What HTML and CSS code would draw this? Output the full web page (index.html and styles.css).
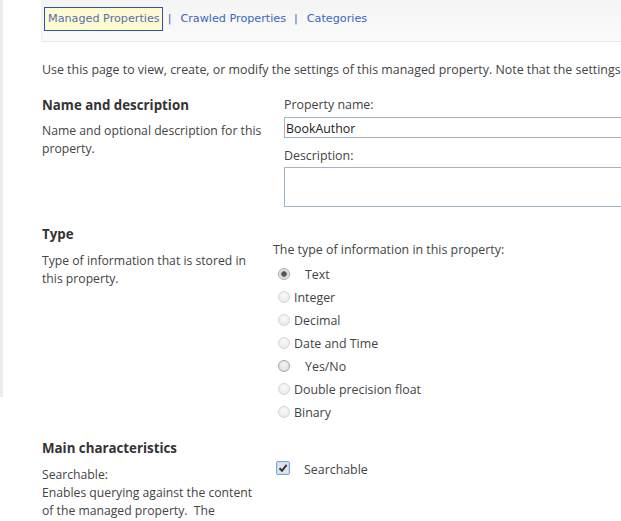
FILE: index.html
```html
<!DOCTYPE html>
<html>
<head>
<meta charset="utf-8">
<link rel="stylesheet" href="styles.css">
</head>
<body>
<div class="page">
  <nav class="tabs">
    <a class="tab tab-active" href="#">Managed Properties</a>
    <span class="sep">|</span>
    <a class="tab" href="#">Crawled Properties</a>
    <span class="sep">|</span>
    <a class="tab" href="#">Categories</a>
  </nav>

  <main class="content">
    <p class="intro">Use this page to view, create, or modify the settings of this managed property. Note that the settings that are changed here apply to all sites.</p>

    <section class="section section-name">
      <div class="left">
        <h2 class="heading">Name and description</h2>
        <p class="desc">Name and optional description for this property.</p>
      </div>
      <div class="right">
        <label class="field-label">Property name:</label>
        <input class="text-input" type="text" value="BookAuthor">
        <label class="field-label field-label-gap">Description:</label>
        <textarea class="text-area"></textarea>
      </div>
    </section>

    <section class="section section-type">
      <div class="left">
        <h2 class="heading">Type</h2>
        <p class="desc">Type of information that is stored in this property.</p>
      </div>
      <div class="right right-type">
        <div class="field-label">The type of information in this property:</div>
        <ul class="radios">
          <li class="radio-row"><span class="radio radio-checked"></span><span class="radio-text radio-text-wide">Text</span></li>
          <li class="radio-row"><span class="radio"></span><span class="radio-text">Integer</span></li>
          <li class="radio-row"><span class="radio"></span><span class="radio-text">Decimal</span></li>
          <li class="radio-row"><span class="radio"></span><span class="radio-text">Date and Time</span></li>
          <li class="radio-row"><span class="radio radio-enabled"></span><span class="radio-text radio-text-wide">Yes/No</span></li>
          <li class="radio-row"><span class="radio"></span><span class="radio-text">Double precision float</span></li>
          <li class="radio-row"><span class="radio"></span><span class="radio-text">Binary</span></li>
        </ul>
      </div>
    </section>

    <section class="section section-main">
      <div class="left">
        <h2 class="heading">Main characteristics</h2>
        <p class="desc desc-narrow">Searchable:<br>Enables querying against the content of the managed property.&nbsp; The content of this managed property is included in the full-text index.</p>
      </div>
      <div class="right right-main">
        <div class="check-row">
          <span class="checkbox"><svg width="10" height="10" viewBox="0 0 10 10"><path d="M1.5 5.2 L4 7.8 L8.6 1.8" fill="none" stroke="#333" stroke-width="2"/></svg></span>
          <span class="check-text">Searchable</span>
        </div>
      </div>
    </section>
  </main>
</div>
</body>
</html>
```

FILE: styles.css
```css
html, body {
  margin: 0;
  padding: 0;
}
body {
  background: #fff linear-gradient(#ececec, #ececec) no-repeat 0 0 / 3px 397px;
  font-family: "Open Sans", "Noto Sans", sans-serif;
  font-size: 12.4px;
  color: #444;
  overflow: hidden;
  width: 621px;
  height: 521px;
}
.page {
  width: 621px;
  overflow: hidden;
}
.tabs {
  margin-left: 41px;
  border-bottom: 1px solid #e8e8e8;
  border-left: 1px solid #f0f0f0;
  background: linear-gradient(#f4f4f4, #fbfbfb);
  display: flex;
  align-items: flex-start;
  padding-top: 7px;
  padding-left: 2px;
  box-sizing: border-box;
  height: 42px;
  font-family: "DejaVu Sans", Verdana, sans-serif;
  font-size: 11.2px;
  white-space: nowrap;
}
.tab {
  color: #3a66c4;
  text-decoration: none;
  line-height: 22px;
  padding: 0 2px 0 3px;
  border: 1px solid transparent;
}
.tab-active {
  background: #fdfbcf;
  border-color: #2d52b4;
  color: #5a6cb4;
}
.sep {
  color: #3a66c4;
  line-height: 24px;
  padding: 0 5px;
}
.content {
  padding-left: 42px;
}
.intro {
  margin: 19px 0 0 0;
  line-height: 18px;
  white-space: nowrap;
}
.section {
  display: grid;
  grid-template-columns: 242px 1fr;
}
.section-name {
  margin-top: 16px;
}
.section-type {
  margin-top: 17px;
  grid-template-columns: 231px 1fr;
}
.section-main {
  margin-top: 14px;
  grid-template-columns: 234px 1fr;
}
.heading {
  margin: 0;
  font-size: 13.3px;
  font-weight: 700;
  color: #333;
  line-height: 20px;
}
.desc {
  margin: 7px 0 0 0;
  line-height: 18px;
  width: 224px;
  font-size: 12.2px;
}
.desc-narrow {
  width: 214px;
}
.section-type .desc {
  margin-top: 8px;
}
.section-main .desc {
  margin-top: 8px;
}
.right {
  display: flex;
  flex-direction: column;
}
.field-label {
  line-height: 18px;
  color: #444;
  display: block;
}
.section-name .field-label:first-child {
  margin-top: 1px;
}
.field-label-gap {
  margin-top: 9px;
}
.text-input {
  margin-top: 3px;
  width: 400px;
  height: 21px;
  box-sizing: border-box;
  border: 1px solid #a3b3c5;
  padding: 1px 1px 0;
  font-family: "Open Sans", "Noto Sans", sans-serif;
  font-size: 12.4px;
  color: #222;
  outline: none;
}
.text-area {
  margin-top: 2px;
  width: 400px;
  height: 40px;
  box-sizing: border-box;
  border: 1px solid #a3b3c5;
  resize: none;
  outline: none;
}
.right-type {
  padding-top: 17px;
}
.radios {
  list-style: none;
  margin: 4px 0 0 0;
  padding: 0;
}
.radio-row {
  display: flex;
  align-items: center;
  height: 23px;
}
.radio {
  width: 12px;
  height: 12px;
  box-sizing: border-box;
  border-radius: 50%;
  margin-left: 5px;
  border: 1px solid #d6d6d6;
  background: radial-gradient(circle at 50% 35%, #fafafa, #e6e6e6);
  flex: none;
  margin-top: -2px;
}
.radio-enabled {
  border-color: #a4a4a4;
  background: radial-gradient(circle at 50% 35%, #f4f4f4, #dadada);
}
.radio-checked {
  border-color: #a9a9a9;
  background: radial-gradient(circle, #555 0, #555 2.3px, #c8c8c8 3px, #f2f2f2 5px);
}
.radio-text {
  margin-left: 4px;
}
.radio-text-wide {
  margin-left: 15px;
}
.right-main {
  padding-top: 22px;
}
.check-row {
  display: flex;
  align-items: center;
  height: 18px;
}
.checkbox {
  width: 14px;
  height: 14px;
  box-sizing: border-box;
  border: 1px solid #7fa8e6;
  border-radius: 2px;
  background: #dfe3ea;
  box-shadow: inset 0 0 0 1px #c6d8f4;
  display: flex;
  align-items: center;
  justify-content: center;
  margin-left: 0;
  margin-top: -2px;
}
.check-text {
  margin-left: 14px;
}
```
